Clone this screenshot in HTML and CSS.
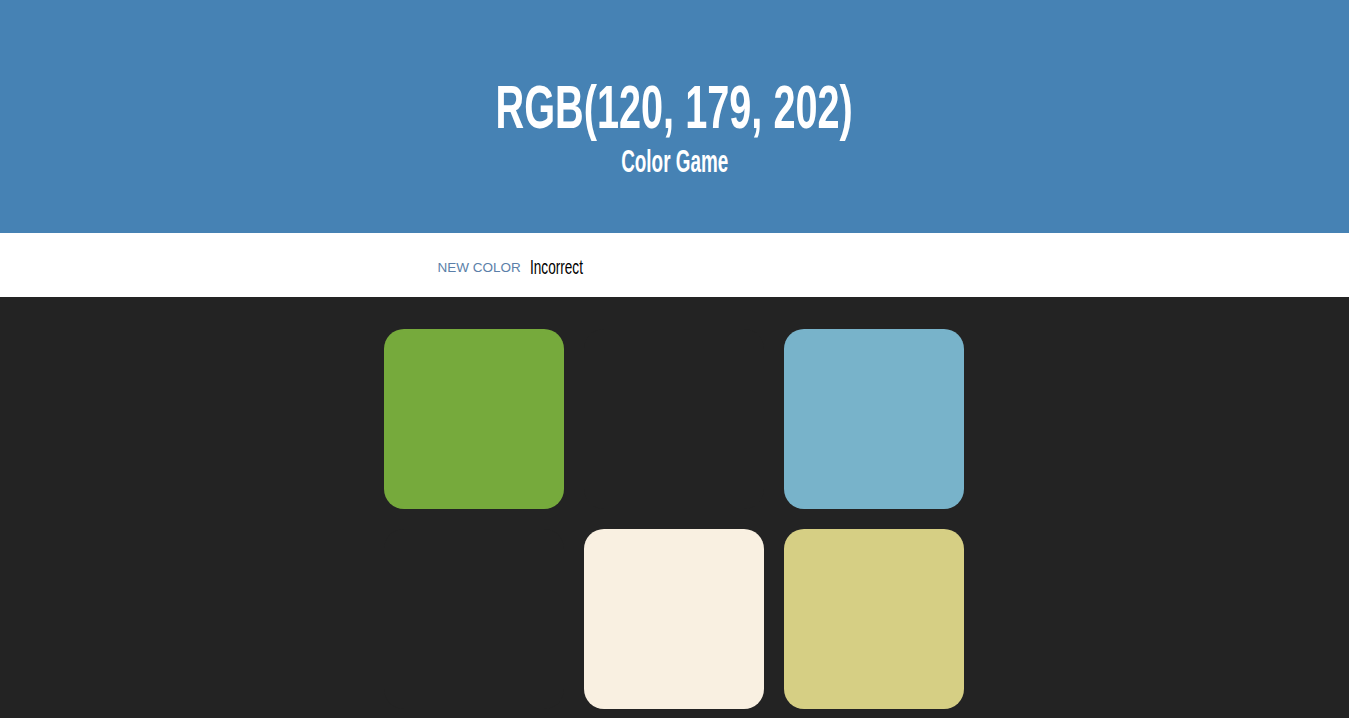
FILE: index.html
```html
<!DOCTYPE html>
<html lang="en">
<head>
<meta charset="utf-8">
<title>Color Game</title>
<link rel="stylesheet" href="styles.css">
</head>
<body>
<header class="header">
  <h1 class="title">
    <span class="rgb">RGB(120, 179, 202)</span>
    <span class="sub">Color Game</span>
  </h1>
</header>
<div class="stripe">
  <div class="stripe-inner">
    <button class="reset">NEW COLOR</button>
    <span class="message">Incorrect</span>
  </div>
</div>
<main class="board">
  <div class="grid">
    <div class="square" style="background: rgb(118, 170, 60)"></div>
    <div class="square hidden"></div>
    <div class="square" style="background: rgb(120, 179, 202)"></div>
    <div class="square hidden"></div>
    <div class="square" style="background: rgb(249, 240, 225)"></div>
    <div class="square" style="background: rgb(214, 207, 132)"></div>
  </div>
</main>
</body>
</html>
```
FILE: styles.css
```css
html, body {
  margin: 0;
  padding: 0;
}
body {
  background: #232323;
  font-family: "Liberation Sans", Arial, sans-serif;
  min-height: 718px;
}
.header {
  background: #4682b4;
  height: 233px;
  display: flex;
  justify-content: center;
  align-items: flex-start;
}
.title {
  margin: 0;
  padding-top: 74px;
  display: flex;
  flex-direction: column;
  align-items: center;
  color: #fff;
  font-family: "Liberation Sans Narrow", "Liberation Sans", sans-serif;
  font-weight: bold;
}
.rgb {
  display: inline-block;
  font-size: 62px;
  line-height: 66px;
  transform: scaleX(0.64);
  white-space: nowrap;
}
.sub {
  display: inline-block;
  margin-top: 4px;
  font-size: 32px;
  line-height: 34px;
  transform: scaleX(0.59);
  white-space: nowrap;
}
.stripe {
  background: #fff;
  height: 64px;
  display: flex;
  justify-content: center;
  align-items: center;
}
.stripe-inner {
  width: 600px;
  display: flex;
  align-items: center;
  padding-left: 63px;
  padding-top: 4px;
  box-sizing: border-box;
}
.reset {
  background: none;
  border: none;
  padding: 0;
  margin-right: 9px;
  color: #5b7fa9;
  font-family: "Liberation Sans", Arial, sans-serif;
  font-size: 13.5px;
  text-transform: uppercase;
  cursor: pointer;
}
.message {
  display: inline-block;
  font-family: "Liberation Sans Narrow", "Liberation Sans", sans-serif;
  font-size: 20px;
  color: #000;
  transform: scaleX(0.68);
  transform-origin: left center;
}
.board {
  display: flex;
  justify-content: center;
  padding-top: 32px;
  padding-right: 1px;
}
.grid {
  display: grid;
  grid-template-columns: repeat(3, 180px);
  gap: 20px;
}
.square {
  width: 180px;
  height: 180px;
  border-radius: 20px;
}
.hidden {
  background: #232323;
}
```
